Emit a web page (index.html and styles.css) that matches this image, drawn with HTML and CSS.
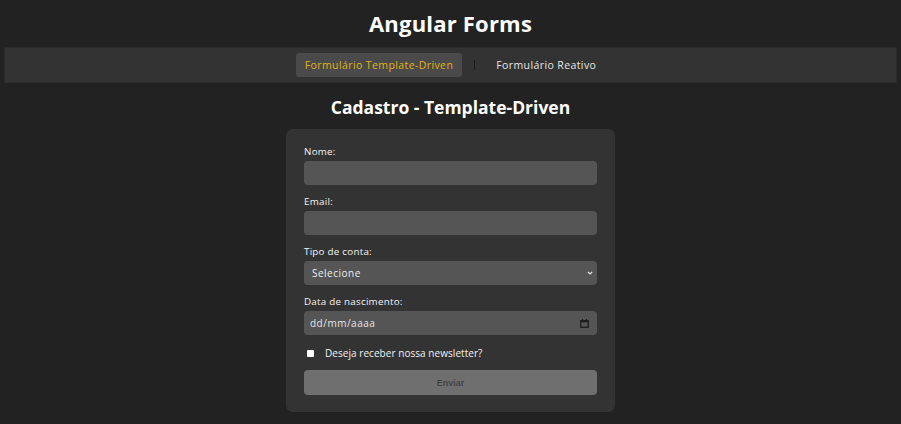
FILE: index.html
```html
<!DOCTYPE html>
<html lang="pt-BR">
<head>
<meta charset="utf-8">
<title>Angular Forms</title>
<link rel="stylesheet" href="styles.css">
</head>
<body>
<h1 class="app-title">Angular Forms</h1>
<nav class="nav">
  <a class="nav-link active" href="#">Formulário Template-Driven</a>
  <span class="nav-sep"></span>
  <a class="nav-link" href="#">Formulário Reativo</a>
</nav>
<h2 class="page-title">Cadastro - Template-Driven</h2>
<form class="card">
  <div class="field">
    <label class="label" for="nome">Nome:</label>
    <input class="control" id="nome" type="text">
  </div>
  <div class="field">
    <label class="label" for="email">Email:</label>
    <input class="control" id="email" type="email">
  </div>
  <div class="field">
    <label class="label" for="tipo">Tipo de conta:</label>
    <div class="control-wrap">
      <select class="control select" id="tipo">
        <option>Selecione</option>
        <option>Pessoal</option>
        <option>Empresarial</option>
      </select>
      <svg class="ctrl-icon chevron" width="6" height="4" viewBox="0 0 6 4"><path d="M0.8 0.8 L3 3 L5.2 0.8" fill="none" stroke="#e8e8e8" stroke-width="1.2"/></svg>
    </div>
  </div>
  <div class="field">
    <label class="label" for="nasc">Data de nascimento:</label>
    <div class="control-wrap">
      <input class="control date" id="nasc" type="text" placeholder="dd/mm/aaaa">
      <svg class="ctrl-icon calendar" width="9" height="9" viewBox="0 0 9 9"><rect x="0.75" y="1.75" width="7.5" height="6.5" fill="none" stroke="#1e1e1e" stroke-width="1.3"/><rect x="0.75" y="1.5" width="7.5" height="1.8" fill="#1e1e1e"/><rect x="2" y="0" width="1.2" height="2" fill="#1e1e1e"/><rect x="5.8" y="0" width="1.2" height="2" fill="#1e1e1e"/></svg>
    </div>
  </div>
  <label class="check-row">
    <input class="check" type="checkbox">
    <span>Deseja receber nossa newsletter?</span>
  </label>
  <button class="submit" type="submit" disabled>Enviar</button>
</form>
</body>
</html>
```

FILE: styles.css
```css
html, body {
  margin: 0;
  padding: 0;
}
body {
  background: #222222;
  color: #ffffff;
  font-family: "Open Sans", "Liberation Sans", sans-serif;
}
.app-title {
  margin: 0;
  padding: 8px 0 9px;
  line-height: 30px;
  font-size: 22px;
  font-weight: 700;
  letter-spacing: 0.2px;
  text-align: center;
  color: #ffffff;
}
.nav {
  margin: 0 4px;
  height: 36px;
  box-sizing: border-box;
  background: #333333;
  border: 1px solid #2c2c2c;
  display: flex;
  align-items: center;
  justify-content: center;
  gap: 12px;
}
.nav-link {
  display: flex;
  align-items: center;
  height: 24px;
  padding: 0 9px;
  border-radius: 3px;
  font-size: 10.5px;
  letter-spacing: 0.4px;
  color: #e6e6e6;
  text-decoration: none;
}
.nav-link.active {
  background: #4a4a4a;
  color: #e2b412;
}
.nav-sep {
  width: 1px;
  height: 10px;
  background: #1a1a1a;
}
.page-title {
  margin: 12px 0 10px;
  line-height: 24px;
  font-size: 17.5px;
  font-weight: 700;
  text-align: center;
  color: #ffffff;
}
.card {
  width: 329px;
  box-sizing: border-box;
  margin: 0 auto;
  padding: 16px 18px 17px;
  background: #333333;
  border-radius: 7px;
  display: flex;
  flex-direction: column;
}
.field {
  display: flex;
  flex-direction: column;
  margin-bottom: 10px;
}
.label {
  line-height: 14px;
  font-size: 9.8px;
  font-weight: 500;
  letter-spacing: 0.25px;
  color: #f4f4f4;
  margin-bottom: 2px;
}
.control-wrap {
  position: relative;
  display: flex;
}
.control {
  box-sizing: border-box;
  width: 100%;
  height: 24px;
  margin: 0;
  border: none;
  border-radius: 4px;
  background: #555555;
  color: #eeeeee;
  font-family: "Open Sans", "Liberation Sans", sans-serif;
  font-size: 10px;
  letter-spacing: 0.5px;
  padding: 0 6px;
  outline: none;
}
.select {
  appearance: none;
  -webkit-appearance: none;
  padding-left: 8px;
}
.date::placeholder {
  color: #e6e6e6;
  opacity: 1;
}
.ctrl-icon {
  position: absolute;
  top: 50%;
  pointer-events: none;
}
.chevron {
  right: 4px;
  margin-top: -2px;
}
.calendar {
  right: 8px;
  margin-top: -4px;
}
.check-row {
  display: flex;
  align-items: center;
  height: 16px;
  font-size: 10px;
  letter-spacing: 0.05px;
  color: #f2f2f2;
}
.check {
  appearance: none;
  -webkit-appearance: none;
  width: 7px;
  height: 7px;
  margin: 0 11px 0 3px;
  background: #ffffff;
  border-radius: 1px;
}
.submit {
  margin-top: 9px;
  height: 25px;
  border: none;
  border-radius: 4px;
  background: #6f6f6f;
  color: #454545;
  font-family: "Liberation Sans", Arial, sans-serif;
  font-size: 9px;
  font-weight: 700;
}
```
